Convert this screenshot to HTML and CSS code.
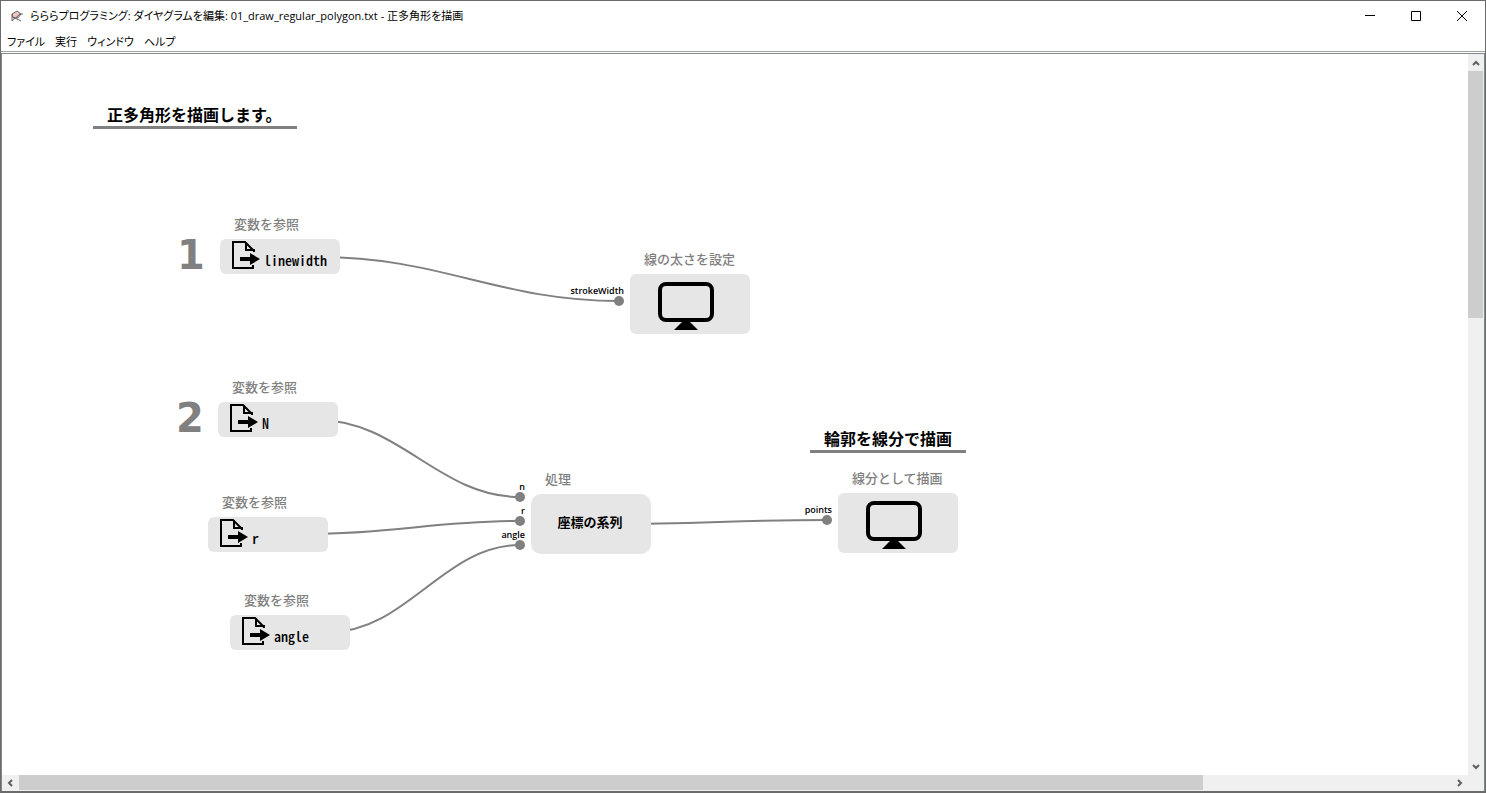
FILE: index.html
```
<!DOCTYPE html>
<html lang="ja">
<head>
<meta charset="utf-8">
<title>らららプログラミング</title>
<link rel="stylesheet" href="styles.css">
</head>
<body>
<svg class="defs" aria-hidden="true">
  <symbol id="doc" viewBox="0 0 30 30">
    <path d="M22 26V29H2V3H14L23 12" fill="none" stroke="#000" stroke-width="2"/>
    <path d="M15 3V11H23V13" fill="none" stroke="#000" stroke-width="2"/>
    <path d="M9 18H19V14L29 20L19 26V22H9Z"/>
  </symbol>
  <symbol id="monitor" viewBox="0 0 56 48">
    <rect x="2" y="2" width="52" height="36" rx="6" fill="none" stroke="#000" stroke-width="4"/>
    <path d="M25 39H31L40 48H16Z"/>
  </symbol>
</svg>
<div class="window">
  <header class="titlebar">
    <svg class="app-icon" viewBox="0 0 12 12" aria-hidden="true">
      <path d="M1 4L6 1L10 4L7 8L2 8Z" fill="#f2c4c4" stroke="#666"/>
      <path d="M1 4V11M1 11L9 4H12M2 7L10 11" fill="none" stroke="#666"/>
    </svg>
    <h1 class="title">らららプログラミング: ダイヤグラムを編集: 01_draw_regular_polygon.txt - 正多角形を描画</h1>
    <div class="controls">
      <button class="control" aria-label="最小化"><svg viewBox="0 0 10 10"><path d="M0 4.500H10"/></svg></button>
      <button class="control" aria-label="最大化"><svg viewBox="0 0 10 10"><path d="M.5 .5H9.500V9.500H.5Z"/></svg></button>
      <button class="control" aria-label="閉じる"><svg viewBox="0 0 10 10"><path d="M0 0L10 10M10 0L0 10"/></svg></button>
    </div>
  </header>
  <nav class="menubar">
    <button class="menu">ファイル</button>
    <button class="menu">実行</button>
    <button class="menu">ウィンドウ</button>
    <button class="menu">ヘルプ</button>
  </nav>
  <main class="viewport">
    <section class="canvas">
      <svg class="wires" aria-hidden="true">
        <path d="M318 203C438 203 497 247 617 247"/>
        <path d="M316 366C397 366 437 443 518 443"/>
        <path d="M306 480C391 480 433 467 518 467"/>
        <path d="M328 578C404 578 442 491 518 491"/>
        <path d="M609 470C695 470 739 466 825 466"/>
      </svg>
      <h2 class="heading h-main">正多角形を描画します。</h2>
      <h2 class="heading h-outline">輪郭を線分で描画</h2>
      <span class="step s1">1</span>
      <span class="step s2">2</span>
      <article class="node n-linewidth"><p class="kind">変数を参照</p><div class="box variable"><svg class="doc"><use href="#doc"/></svg><b class="name">linewidth</b></div></article>
      <article class="node n-n"><p class="kind">変数を参照</p><div class="box variable"><svg class="doc"><use href="#doc"/></svg><b class="name">N</b></div></article>
      <article class="node n-r"><p class="kind">変数を参照</p><div class="box variable"><svg class="doc"><use href="#doc"/></svg><b class="name">r</b></div></article>
      <article class="node n-angle"><p class="kind">変数を参照</p><div class="box variable"><svg class="doc"><use href="#doc"/></svg><b class="name">angle</b></div></article>
      <article class="node n-stroke"><p class="kind">線の太さを設定</p><div class="box device"><svg class="monitor"><use href="#monitor"/></svg></div></article>
      <article class="node n-process"><p class="kind">処理</p><div class="box process">座標の系列</div></article>
      <article class="node n-lines"><p class="kind">線分として描画</p><div class="box device"><svg class="monitor"><use href="#monitor"/></svg></div></article>
      <span class="port p-stroke">strokeWidth</span>
      <span class="port p-n">n</span>
      <span class="port p-r">r</span>
      <span class="port p-angle">angle</span>
      <span class="port p-points">points</span>
    </section>
    <div class="scroll vertical">
      <button class="arrow" aria-label="上へ"><svg viewBox="0 0 8 8"><path d="M1 6L4 3L7 6"/></svg></button>
      <div class="track"><div class="thumb"></div></div>
      <button class="arrow" aria-label="下へ"><svg viewBox="0 0 8 8"><path d="M1 2L4 5L7 2"/></svg></button>
    </div>
    <div class="scroll horizontal">
      <button class="arrow" aria-label="左へ"><svg viewBox="0 0 8 8"><path d="M5 1L2 4L5 7"/></svg></button>
      <div class="track"><div class="thumb"></div></div>
      <button class="arrow" aria-label="右へ"><svg viewBox="0 0 8 8"><path d="M2 1L5 4L2 7"/></svg></button>
    </div>
  </main>
</div>
</body>
</html>
```
FILE: styles.css
```
* { box-sizing: border-box; }
body { margin: 0; background: #fff; color: #000; font-family: "Noto Sans CJK JP", sans-serif; }
h1, h2, p { margin: 0; }
button { padding: 0; border: 0; background: transparent; color: inherit; font: inherit; }
.defs { position: absolute; width: 0; height: 0; }

.window { display: flex; flex-direction: column; height: 100vh; border: 1px solid #6b6b6b; border-bottom-width: 2px; }
.titlebar { display: flex; align-items: center; height: 29px; padding-left: 10px; font-family: "Open Sans", "Noto Sans CJK JP", sans-serif; }
.app-icon { width: 12px; height: 12px; margin-right: 7px; }
.title { flex: 1; font-size: 11px; font-weight: 400; line-height: 20px; white-space: nowrap; font-feature-settings: "palt"; }
.controls { display: flex; }
.control { display: grid; place-items: center; width: 46px; height: 28px; }
.control svg { width: 10px; height: 10px; overflow: visible; fill: none; stroke: #000; }

.menubar { display: flex; gap: 10px; height: 22px; padding: 0 6px; border-bottom: 1px solid #a0a0a0; }
.menu { font-size: 11px; line-height: 20px; font-feature-settings: "palt"; }

.viewport { flex: 1; min-height: 0; display: grid; grid-template-columns: 1fr 16px; grid-template-rows: 1fr 16px; margin-top: 1px; border: 1px solid #828790; border-bottom: 0; background: #f0f0f0; }
.canvas { position: relative; overflow: hidden; background: #fff; }
.wires { position: absolute; inset: 0; width: 100%; height: 100%; fill: none; stroke: #808080; stroke-width: 2; }

.heading { position: absolute; padding: 0 14px; border-bottom: 3px solid #808080; font-size: 16px; font-weight: 700; line-height: 24px; white-space: nowrap; }
.h-main { left: 91px; top: 48px; padding-right: 16px; }
.h-outline { left: 808px; top: 372px; }

.step { position: absolute; color: #808080; font: 700 40px/48px "DejaVu Sans", sans-serif; }
.s1 { left: 175px; top: 177px; }
.s2 { left: 174px; top: 340px; }

.node { position: absolute; width: 120px; }
.kind { padding: 0 0 6px 14px; color: #808080; font-size: 13px; font-weight: 500; line-height: 18px; white-space: nowrap; }
.box { display: flex; border-radius: 6px; background: #e6e6e6; }
.variable { height: 35px; padding-left: 11px; }
.device { height: 60px; padding: 8px 28px; }
.process { align-items: center; justify-content: center; height: 60px; border-radius: 10px; padding: 0 2px 6px 0; font-size: 13px; font-weight: 700; }
.doc { flex: none; width: 30px; height: 30px; }
.monitor { width: 56px; height: 48px; }
.name { margin-left: 3px; padding-top: 11px; font-size: 14px; font-weight: 500; line-height: 20px; font-feature-settings: "hwid"; }
.n-linewidth { left: 218px; top: 161px; }
.n-n { left: 216px; top: 324px; }
.n-r { left: 206px; top: 439px; }
.n-angle { left: 228px; top: 537px; }
.n-stroke { left: 628px; top: 196px; }
.n-process { left: 529px; top: 416px; }
.n-lines { left: 836px; top: 415px; }

.port { position: absolute; font: 600 9px/10px "Open Sans", sans-serif; text-align: right; white-space: nowrap; }
.port::after { content: ""; display: block; width: 10px; height: 10px; margin-left: auto; border-radius: 50%; background: #808080; }
.p-stroke { right: 844px; top: 232px; }
.p-n { right: 943px; top: 428px; }
.p-r { right: 943px; top: 452px; }
.p-angle { right: 943px; top: 476px; }
.p-points { right: 636px; top: 451px; }

.scroll { display: flex; }
.vertical { flex-direction: column; padding-right: 1px; }
.horizontal { padding-bottom: 1px; }
.arrow { display: grid; place-items: center; flex: none; width: 17px; height: 17px; }
.vertical .arrow { width: 15px; }
.horizontal .arrow { height: 15px; }
.arrow svg { width: 8px; height: 8px; fill: none; stroke: #606060; stroke-width: 2; }
.track { flex: 1; }
.thumb { background: #cdcdcd; }
.vertical .thumb { height: 36%; }
.horizontal .thumb { width: 82.7%; height: 100%; }
```
